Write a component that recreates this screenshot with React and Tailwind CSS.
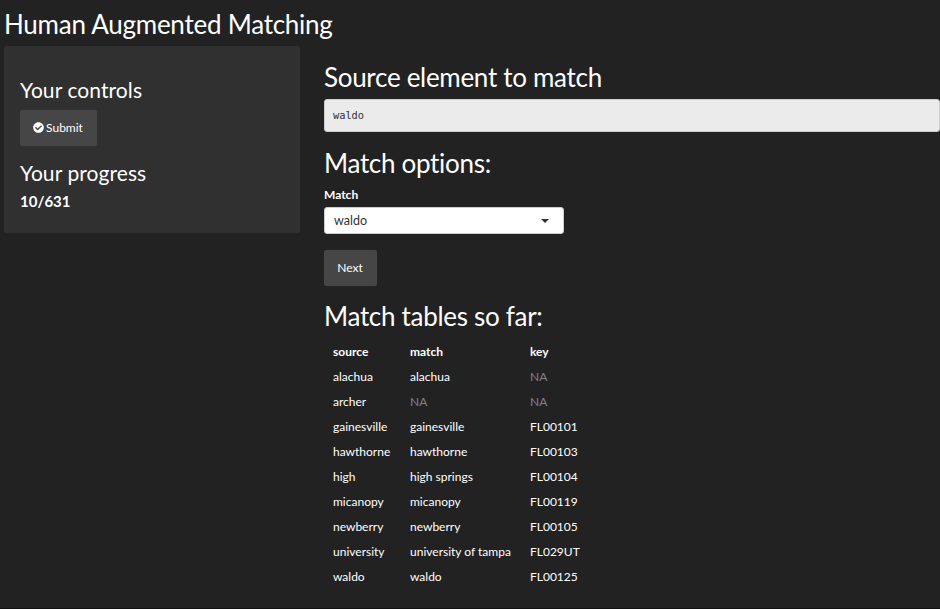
import { FaCheckCircle } from "react-icons/fa";

const rows = [
  ["alachua", "alachua", null],
  ["archer", null, null],
  ["gainesville", "gainesville", "FL00101"],
  ["hawthorne", "hawthorne", "FL00103"],
  ["high", "high springs", "FL00104"],
  ["micanopy", "micanopy", "FL00119"],
  ["newberry", "newberry", "FL00105"],
  ["university", "university of tampa", "FL029UT"],
  ["waldo", "waldo", "FL00125"],
];

function Cell({ value }) {
  return (
    <td className="h-[25px] p-0 align-middle">
      {value === null ? <span className="text-[#85808c]">NA</span> : value}
    </td>
  );
}

export default function App() {
  return (
    <div className="h-[609px] w-[940px] overflow-hidden border-b border-[#111111] bg-[#222222] pt-[8px] pl-[4px] font-['Lato',sans-serif] text-[12px] leading-[17px] text-white">
      <h1 className="h-[38px] text-[26px] leading-[33px] tracking-[-0.25px] whitespace-nowrap">Human Augmented Matching</h1>
      <div className="flex items-start">
        <aside className="h-[187px] w-[296px] shrink-0 rounded-[2px] bg-[#303030] px-4 pt-[32px]">
          <h3 className="text-[21px] leading-[24px] tracking-[0.08px]">Your controls</h3>
          <button className="mt-[8px] flex h-[36px] w-[77px] items-center justify-center gap-[2px] rounded-[2px] bg-[#464646] pr-[1px] pb-[2px]">
            <FaCheckCircle size={11} />
            Submit
          </button>
          <h3 className="mt-[15px] text-[21px] leading-[24px] tracking-[0.08px]">Your progress</h3>
          <p className="mt-[8px] text-[15px] leading-[17px] font-bold">10/631</p>
        </aside>
        <main className="ml-[24px] w-[616px] shrink-0 pt-[15px]">
          <h2 className="text-[26px] leading-[33px] tracking-[-0.3px]">Source element to match</h2>
          <pre className="mt-[5px] h-[33px] rounded-[3px] border border-[#cccccc] bg-[#ebebeb] pl-[8px] font-['DejaVu_Sans_Mono',monospace] text-[10.3px] leading-[31px] text-[#303030]">waldo</pre>
          <h2 className="mt-[15px] text-[26px] leading-[33px] tracking-[-0.3px]">Match options:</h2>
          <label className="mt-[6px] block leading-[17px] font-bold">Match</label>
          <div className="mt-[4px] flex h-[27px] w-[240px] items-center justify-between rounded-[3px] border border-[#cccccc] bg-white pr-[14px] pl-[9px] text-[#333333]">
            <span className="pb-[1px] text-[12.5px]">waldo</span>
            <span className="border-x-[4px] border-t-[4px] border-x-transparent border-t-[#333333]" />
          </div>
          <button className="mt-[16px] block h-[36px] w-[53px] rounded-[2px] bg-[#464646] pr-[1px] pb-[2px]">Next</button>
          <h2 className="mt-[14px] text-[26px] leading-[33px] tracking-[-0.3px]">Match tables so far:</h2>
          <table className="mt-[6px] ml-[9px] w-[270px] table-fixed border-collapse">
            <colgroup>
              <col className="w-[77px]" />
              <col className="w-[120px]" />
              <col className="w-[73px]" />
            </colgroup>
            <thead>
              <tr className="text-left">
                <th className="h-[25px] p-0">source</th>
                <th className="h-[25px] p-0">match</th>
                <th className="h-[25px] p-0">key</th>
              </tr>
            </thead>
            <tbody className="whitespace-nowrap">
              {rows.map((row) => (
                <tr key={row[0]}>
                  {row.map((value, i) => (
                    <Cell key={i} value={value} />
                  ))}
                </tr>
              ))}
            </tbody>
          </table>
        </main>
      </div>
    </div>
  );
}
